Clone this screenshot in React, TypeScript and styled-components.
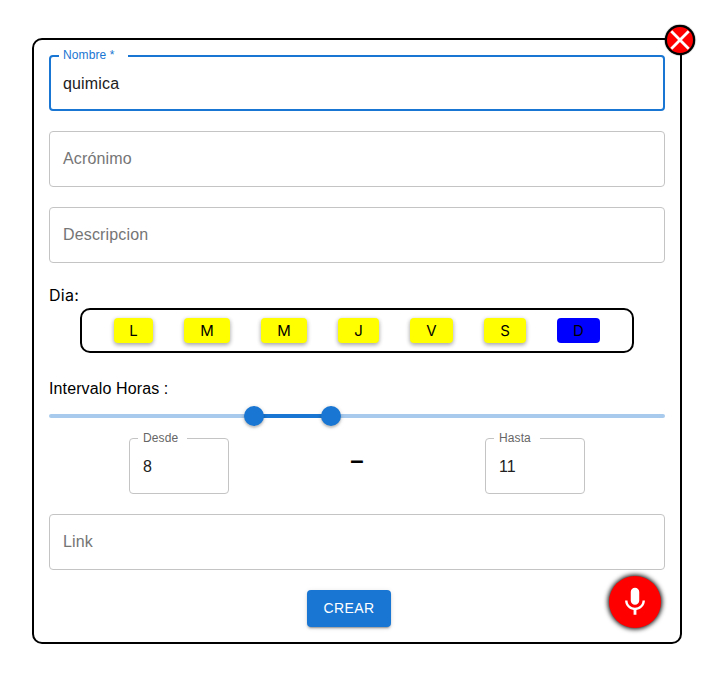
import React from "react";
import styled, { createGlobalStyle, css } from "styled-components";

const GlobalStyle = createGlobalStyle`
  *, *::before, *::after { box-sizing: border-box; }
  body {
    margin: 0;
    background: #fff;
    color: #000;
    font-family: "Liberation Sans", Arial, sans-serif;
    font-size: 16px;
  }
`;

const Page = styled.main`
  padding: 38px 0 0 32px;
  height: 677px;
  overflow: hidden;
`;

const Panel = styled.form`
  position: relative;
  display: flex;
  flex-direction: column;
  width: 650px;
  height: 606px;
  padding: 15px;
  border: 2px solid #000;
  border-radius: 10px;
`;

const Field = styled.div<{ $width?: number }>`
  position: relative;
  flex: none;
  display: flex;
  align-items: center;
  width: ${(p) => (p.$width ? `${p.$width}px` : "100%")};
  height: 56px;
  padding: 0 14px;
`;

const Outline = styled.fieldset<{ $focused?: boolean; $notched: boolean }>`
  position: absolute;
  inset: ${(p) => (p.$notched ? "-5px" : "0")} 0 0;
  margin: 0;
  padding: 0 8px;
  min-width: 0;
  border: ${(p) => (p.$focused ? "2px solid #1976d2" : "1px solid #c4c4c4")};
  border-radius: 4px;
  pointer-events: none;
`;

const Notch = styled.legend<{ $width: number }>`
  width: ${(p) => p.$width}px;
  height: 11px;
  padding: 0;
`;

const FloatingLabel = styled.label<{ $focused?: boolean }>`
  position: absolute;
  top: -8px;
  left: 14px;
  font-size: 12px;
  line-height: 17px;
  letter-spacing: 0.11px;
  white-space: nowrap;
  color: ${(p) => (p.$focused ? "#1976d2" : "#666")};
`;

const inputText = css`
  font: 16px/23px "Liberation Sans", Arial, sans-serif;
  letter-spacing: 0.15px;
`;

const Input = styled.input`
  ${inputText}
  width: 100%;
  height: 23px;
  padding: 0;
  border: 0;
  outline: 0;
  background: none;
  color: #212121;
`;

const Placeholder = styled.label`
  ${inputText}
  color: #757575;
  margin-bottom: 2px;
`;

const Fields = styled.div`
  display: grid;
  gap: 20px;
`;

const DayLabel = styled.div`
  margin-top: 20px;
  height: 25px;
  font: 16px/24px Inter, sans-serif;
  letter-spacing: 0.25px;
`;

const Days = styled.div`
  display: flex;
  gap: 31px;
  align-items: center;
  width: 554px;
  height: 45px;
  margin-left: 31px;
  padding: 0 32px;
  border: 2px solid #000;
  border-radius: 10px;
`;

const Day = styled.button<{ $width: number; $selected?: boolean }>`
  flex: none;
  width: ${(p) => p.$width}px;
  height: 25px;
  padding: 0;
  border: 0;
  border-radius: 4px;
  background: ${(p) => (p.$selected ? "#00f" : "#ff0")};
  color: #000;
  font: 400 15px/25px Inter, sans-serif;
  box-shadow: ${(p) =>
    p.$selected ? "none" : "0 2px 4px rgba(0,0,0,.28), 0 1px 5px rgba(0,0,0,.12)"};
`;

const HoursLabel = styled.div`
  margin-top: 26px;
  line-height: 19px;
  letter-spacing: 0.12px;
`;

const Slider = styled.div`
  position: relative;
  flex: none;
  height: 4px;
  margin-top: 16px;
  border-radius: 2px;
  background: #a8caed;
`;

const Range = styled.div`
  position: absolute;
  top: 0;
  left: 33.333%;
  width: 12.5%;
  height: 4px;
  background: #1976d2;
`;

const Thumb = styled.div<{ $hour: number }>`
  position: absolute;
  top: -8px;
  left: calc(${(p) => (p.$hour / 24) * 100}% - 10px);
  width: 20px;
  height: 20px;
  border-radius: 50%;
  background: #1976d2;
  box-shadow: 0 2px 2px rgba(0, 0, 0, 0.14), 0 1px 4px rgba(0, 0, 0, 0.2);
`;

const Hours = styled.div`
  display: flex;
  justify-content: space-between;
  width: 456px;
  margin: 20px 0 20px 80px;
`;

const Dash = styled.span`
  font: bold 24px/44px "Liberation Sans", Arial, sans-serif;
`;

const Submit = styled.button`
  align-self: center;
  width: 84px;
  height: 37px;
  margin: 20px 16px 0 0;
  padding: 0 0 1px;
  border: 0;
  border-radius: 4px;
  background: #1976d2;
  color: #fff;
  font: 14px/24px "Liberation Sans", Arial, sans-serif;
  letter-spacing: 0.4px;
  box-shadow: 0 3px 1px -2px rgba(0, 0, 0, 0.2), 0 2px 2px rgba(0, 0, 0, 0.14),
    0 1px 5px rgba(0, 0, 0, 0.12);
`;

const RoundButton = styled.button`
  position: absolute;
  display: grid;
  place-items: center;
  padding: 0;
  border-radius: 50%;
  background: #f00;
`;

const Close = styled(RoundButton)`
  top: -15px;
  right: -15px;
  width: 30px;
  height: 30px;
  border: 2px solid #000;
  box-shadow: 0 0 1px 0.3px #000;
`;

const Microphone = styled(RoundButton)`
  right: 19px;
  bottom: 14px;
  width: 52px;
  height: 52px;
  border: 0;
  box-shadow: 0 0 5px 1px #000;
`;

function TextField({ label, value, notch, focused, width }: {
  label: string;
  value?: string;
  notch?: number;
  focused?: boolean;
  width?: number;
}) {
  return (
    <Field $width={width}>
      <Outline $focused={focused} $notched={!!notch}>
        {notch && <Notch $width={notch} />}
      </Outline>
      {notch ? (
        <>
          <FloatingLabel $focused={focused}>{label}</FloatingLabel>
          <Input defaultValue={value} aria-label={label} />
        </>
      ) : (
        <Placeholder>{label}</Placeholder>
      )}
    </Field>
  );
}

const days = [
  { name: "L", width: 39 },
  { name: "M", width: 46 },
  { name: "M", width: 46 },
  { name: "J", width: 41 },
  { name: "V", width: 43 },
  { name: "S", width: 42 },
  { name: "D", width: 43, selected: true },
];

export default function App() {
  return (
    <Page>
      <GlobalStyle />
      <Panel onSubmit={(e) => e.preventDefault()}>
        <Fields>
          <TextField label="Nombre *" value="quimica" notch={69} focused />
          <TextField label="Acrónimo" />
          <TextField label="Descripcion" />
        </Fields>
        <DayLabel>Dia:</DayLabel>
        <Days>
          {days.map((d, i) => (
            <Day key={i} type="button" $width={d.width} $selected={d.selected}>
              {d.name}
            </Day>
          ))}
        </Days>
        <HoursLabel>Intervalo Horas :</HoursLabel>
        <Slider>
          <Range />
          <Thumb $hour={8} />
          <Thumb $hour={11} />
        </Slider>
        <Hours>
          <TextField label="Desde" value="8" notch={49} width={100} />
          <Dash>–</Dash>
          <TextField label="Hasta" value="11" notch={46} width={100} />
        </Hours>
        <TextField label="Link" />
        <Submit>CREAR</Submit>
        <Close type="button" aria-label="Cerrar">
          <svg width="20" height="20" viewBox="0 0 20 20" stroke="#fff" strokeWidth="2.8">
            <path d="M1.3 1.3 18.7 18.7M18.7 1.3 1.3 18.7" />
          </svg>
        </Close>
        <Microphone type="button" aria-label="Dictar">
          <svg width="34" height="34" viewBox="0 0 24 24" fill="#fff">
            <path d="M12 14c1.66 0 2.99-1.34 2.99-3L15 5c0-1.66-1.34-3-3-3S9 3.34 9 5v6c0 1.66 1.34 3 3 3zm5.3-3c0 3-2.54 5.1-5.3 5.1S6.7 14 6.7 11H5c0 3.41 2.72 6.23 6 6.72V21h2v-3.28c3.28-.48 6-3.3 6-6.72h-1.7z" />
          </svg>
        </Microphone>
      </Panel>
    </Page>
  );
}
